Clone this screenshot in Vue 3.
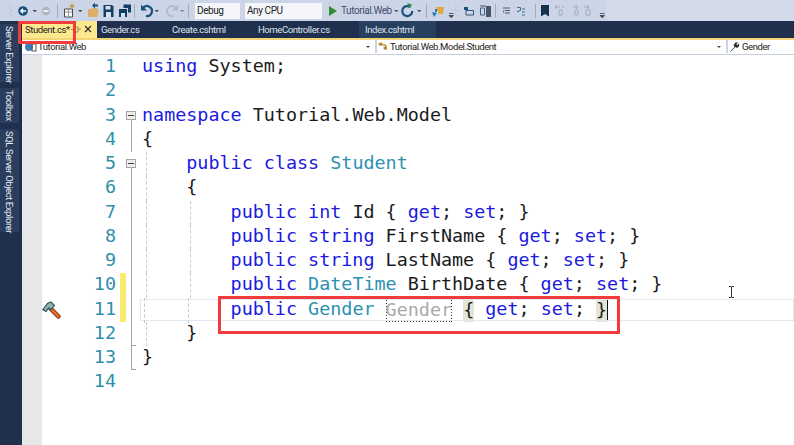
<script setup>
const k = 'kw', t = 'ty', p = 'pl'
const lines = [
  { i: 0, c: [[k, 'using'], [p, ' System;']] },
  { i: 0, c: [] },
  { i: 0, fold: 'box', c: [[k, 'namespace'], [p, ' Tutorial.Web.Model']] },
  { i: 0, fold: 'line', c: [[p, '{']] },
  { i: 1, fold: 'box', c: [[k, 'public class'], [p, ' '], [t, 'Student']] },
  { i: 1, fold: 'line', c: [[p, '{']] },
  { i: 2, fold: 'line', c: [[k, 'public int'], [p, ' Id { '], [k, 'get'], [p, '; '], [k, 'set'], [p, '; }']] },
  { i: 2, fold: 'line', c: [[k, 'public string'], [p, ' FirstName { '], [k, 'get'], [p, '; '], [k, 'set'], [p, '; }']] },
  { i: 2, fold: 'line', c: [[k, 'public string'], [p, ' LastName { '], [k, 'get'], [p, '; '], [k, 'set'], [p, '; }']] },
  { i: 2, fold: 'line', ch: 1, c: [[k, 'public'], [p, ' '], [t, 'DateTime'], [p, ' BirthDate { '], [k, 'get'], [p, '; '], [k, 'set'], [p, '; }']] },
  { i: 2, fold: 'line', ch: 1, cur: 1, c: [[k, 'public'], [p, ' '], [t, 'Gender'], [p, ' '], ['ghost', 'Gender'], [p, ' '], ['brace', '{'], [p, ' '], [k, 'get'], [p, '; '], [k, 'set'], [p, '; '], ['brace', '}'], ['caret', '']] },
  { i: 1, fold: 'end', c: [[p, '}']] },
  { i: 0, fold: 'last', c: [[p, '}']] },
  { i: 0, c: [] }
]
const tabs = ['Gender.cs', 'Create.cshtml', 'HomeController.cs', 'Index.cshtml']
const sideItems = ['Server Explorer', 'Toolbox', 'SQL Server Object Explorer']
</script>

<template>
  <div class="app">
    <div class="toolbar">
      <svg class="tb-icons" width="794" height="21" viewBox="0 0 794 21">
        <rect x="606" y="0" width="188" height="21" fill="#d3dbea"/>
        <g fill="#aeb5c4"><rect x="9" y="5" width="1" height="1"/><rect x="11" y="7" width="1" height="1"/><rect x="9" y="9" width="1" height="1"/><rect x="11" y="11" width="1" height="1"/><rect x="9" y="13" width="1" height="1"/><rect x="11" y="15" width="1" height="1"/></g>
        <circle cx="23" cy="11" r="4.800" fill="#17527f"/><path d="M26 11h-5M23 8.800L20.800 11l2.200 2.200" stroke="#fff" stroke-width="1.300" fill="none"/>
        <path d="M32.500 10h4.500l-2.250 2.300z" fill="#4a4a4a"/>
        <circle cx="46" cy="11" r="4.200" fill="#aeb3bd"/><rect x="43.300" y="10" width="5.400" height="2" fill="#e6e9f0"/>
        <rect x="57" y="4" width="1" height="14" fill="#a4acbc"/>
        <path d="M64.500 9h8v8h-8z" fill="#f4f5f8" stroke="#4a4a4a"/><path d="M65 12h7M68.500 9v8" stroke="#999"/><path d="M72 3.500v5M69.500 6h5" stroke="#c59a3e" stroke-width="1.600"/>
        <path d="M78 10h4.500l-2.250 2.300z" fill="#4a4a4a"/>
        <path d="M88 9h3.500l1-1h4.500v2h2l-2 7h-9z" fill="#e0ad66"/><path d="M92 5.500l3-3v2h3v2h-3v2z" fill="#17527f"/>
        <path d="M103.500 5h8.500l1.500 1.500V17h-10z" fill="#123f66"/><rect x="105.500" y="6" width="5" height="3.500" fill="#d8e0ee"/><rect x="106" y="12" width="5" height="5" fill="#d8e0ee"/>
        <path d="M119 9h8v8h-8z" fill="#123f66"/><path d="M123.500 4.500h7.500v8h-3V8h-4.500z" fill="#123f66"/><rect x="121" y="13" width="4" height="4" fill="#d8e0ee"/>
        <rect x="134" y="4" width="1" height="14" fill="#a4acbc"/>
        <path d="M143 8a5 5 0 1 1 3 8" stroke="#17527f" stroke-width="2.200" fill="none"/><path d="M141 4.500v6h6z" fill="#17527f"/>
        <path d="M154.500 10h4.500l-2.250 2.300z" fill="#4a4a4a"/>
        <path d="M176 8a5 5 0 1 0-3 8" stroke="#b3b9c4" stroke-width="1.600" fill="none"/><path d="M178 4.500v6h-6z" fill="#b3b9c4"/>
        <path d="M180 10h4.500l-2.250 2.300z" fill="#8a8a8a"/>
        <rect x="188" y="4" width="1" height="14" fill="#a4acbc"/>
        <path d="M229 10h5l-2.500 2.500z" fill="#444"/>
        <path d="M314 10h5l-2.500 2.500z" fill="#444"/>
        <path d="M329 6l8 5-8 5z" fill="#2f8f32"/>
        <path d="M394 10h4.500l-2.250 2.300z" fill="#555"/>
        <path d="M410.500 7.200a5 5 0 1 0 1.800 3.800" stroke="#17527f" stroke-width="2.200" fill="none"/><path d="M407 3l5 1.500-2 3.500z" fill="#2f8f32"/>
        <path d="M417 10h4.500l-2.250 2.300z" fill="#555"/>
        <rect x="426" y="4" width="1" height="14" fill="#a4acbc"/>
        <path d="M436 7h8l-1 7h-4z" fill="#e0a83c"/><path d="M432 12l5 1-3 4z" fill="#2a77b5"/><path d="M435 9h2v3h-2z" fill="#2a77b5"/>
        <path d="M449 13.500h4.500M449 15.500h4.500l-2.250 2.300z" stroke="#444" stroke-width=".8" fill="#444"/>
        <g fill="#aeb5c4"><rect x="455" y="5" width="1" height="1"/><rect x="457" y="7" width="1" height="1"/><rect x="455" y="9" width="1" height="1"/><rect x="457" y="11" width="1" height="1"/><rect x="455" y="13" width="1" height="1"/><rect x="457" y="15" width="1" height="1"/></g>
        <path d="M466 10.500h7.500v4.500H466z" stroke="#33506f" fill="none"/><path d="M464 7h4v3h-4z" fill="#17527f"/>
        <path d="M480.500 8h4v7h-4z" stroke="#3e5f88" fill="none"/><path d="M486 6h5v11h-5z" fill="#4a5568"/><path d="M480 6h6" stroke="#555"/>
        <rect x="495" y="4" width="1" height="14" fill="#a4acbc"/>
        <path d="M503 8h7M505 10.500h5M505 13h5" stroke="#4c5a6e" stroke-width="1.200"/><path d="M503 10l1.500 1.500L503 13z" fill="#43813f"/>
        <path d="M517 7.500h3.500v3H519v1h-2M522 9h3M522 12h3M522 15h3" stroke="#3f6f96" fill="none"/>
        <rect x="535" y="4" width="1" height="14" fill="#a4acbc"/>
        <path d="M541 5h8v11.500l-4-2.500-4 2.500z" fill="#17324f"/>
        <g stroke="#a2adbe" fill="none"><path d="M555 7h5M557 5l-2 2 2 2M559 10h3v5h-3z"/><path d="M564 7h-2"/><path d="M573 7h5M576 5l2 2-2 2M575 10h3v5h-3z"/><path d="M584 7h5M587 5l2 2-2 2M586 10h4v5h-4z"/></g>
        <path d="M600 13.500h4.500M600 15.500h4.500l-2.250 2.300z" stroke="#444" stroke-width=".8" fill="#444"/>
      </svg>
      <div class="combo debug">Debug</div>
      <div class="combo cpu">Any CPU</div>
      <div class="run">Tutorial.Web</div>
    </div>

    <div class="tabbar">
      <div class="tab-active">
        <span>Student.cs*</span>
        <svg class="tab-icons" width="24" height="11" viewBox="0 0 24 11">
          <path d="M3 3h4v5H3zM7 5h3M0 5.500h3" stroke="#9a8a4a" fill="none"/>
          <path d="M14 2l6 6M20 2l-6 6" stroke="#2c2c2c" stroke-width="1.200"/>
        </svg>
      </div>
      <div v-for="tab in tabs" :key="tab" class="tab">{{ tab }}</div>
      <div class="tab-pad"></div>
    </div>

    <div class="main">
      <div class="side">
        <div v-for="s in sideItems" :key="s" class="side-item">{{ s }}</div>
      </div>
      <div class="content">
        <div class="nav">
          <div class="nav-cell n1">
            <svg width="13" height="11" viewBox="0 0 13 11"><circle cx="5" cy="6" r="4" fill="#3f7fc0"/><rect x="8" y="3" width="4" height="7" fill="none" stroke="#555"/></svg>
            <span>Tutorial.Web</span>
            <i class="drop"></i>
          </div>
          <div class="nav-cell n2">
            <svg width="13" height="11" viewBox="0 0 13 11"><path d="M1 3l3-2 2 2-3 2zM6 7l2-2 2 2-2 2z" fill="#c98a2b"/><path d="M4 4h5v5" stroke="#a67426" fill="none"/></svg>
            <span>Tutorial.Web.Model.Student</span>
            <i class="drop"></i>
          </div>
          <div class="nav-cell n3">
            <svg width="11" height="12" viewBox="0 0 12 12"><path d="M1 11l5-5-1-2 2-3h3L8 3l1 1 2-2v3l-2 2-2-1-5 5z" fill="#2b2b2b"/></svg>
            <span>Gender</span>
          </div>
        </div>
        <div class="editor">
          <div class="glyph"></div>
          <div class="code">
            <div v-for="(l, n) in lines" :key="n" class="row">
              <div class="hammer-cell">
                <svg v-if="l.cur" width="20" height="20" viewBox="0 0 20 20">
                  <path d="M8 8l8.500 8.500" stroke="#6d2a12" stroke-width="4.500" stroke-linecap="round"/>
                  <path d="M8 8l8.500 8.500" stroke="#ee6a2c" stroke-width="2.700" stroke-linecap="round"/>
                  <path d="M.8 9.500L5.500 3.500 9 1.800l3.500 3.700-3.800 4.300-2.300-1.800-2.300 3.600z" fill="#8fb0b6" stroke="#1f4d50" stroke-width="1.100"/>
                </svg>
              </div>
              <div class="num">{{ n + 1 }}</div>
              <div class="change" :class="{ on: l.ch }"></div>
              <div class="fold" :class="l.fold">
                <span v-if="l.fold === 'box'" class="minus"></span>
              </div>
              <div class="text" :class="{ current: l.cur }">
                <i v-for="g in l.i" :key="g" class="guide" :style="{ left: (g * 44.500 - 41) + 'px' }"></i>
                <span class="indent">{{ '    '.repeat(l.i) }}</span><span v-for="(s, j) in l.c" :key="j" :class="s[0]">{{ s[1] }}</span>
              </div>
            </div>
          </div>
          <svg class="ibeam" width="7" height="12" viewBox="0 0 7 12"><path d="M1 .5h2l.5.5.5-.5h2M3.500 1v10M1 11.500h2l.5-.5.5.5h2" stroke="#333" fill="none"/></svg>
          <div class="outline o-code"></div>
        </div>
      </div>
    </div>
    <div class="outline o-tab"></div>
  </div>
</template>

<style>
html, body { margin: 0; background: #fff; }
</style>

<style scoped>
.app { position: relative; width: 794px; height: 445px; overflow: hidden; display: flex; flex-direction: column; font-family: Roboto, "Noto Sans", sans-serif; background: #fff; letter-spacing: -0.42px; }
.toolbar { position: relative; height: 21px; flex: none; background: #ccd5e8; font-size: 9.500px; color: #222; }
.tb-icons { position: absolute; left: 0; top: 0; }
.combo { position: absolute; top: 3px; height: 16px; line-height: 16px; background: #f4f6fa; padding-left: 2px; box-sizing: border-box; font-size: 10px; }
.debug { left: 195px; width: 45px; padding-left: 2px; }
.cpu { left: 245px; width: 77px; }
.run { position: absolute; left: 341px; top: 3px; line-height: 16px; color: #3e4f6a; font-size: 10px; }
.tabbar { height: 19px; flex: none; display: flex; background: #1f2f4d; border-bottom: 2px solid #f2d675; box-sizing: border-box; padding-left: 22px; font-size: 9.500px; }
.tab-active { width: 75px; height: 17px; background: #fbe88f; color: #222; line-height: 17px; display: flex; justify-content: space-between; align-items: center; padding: 0 2px 0 3px; box-sizing: border-box; }
.tab-icons { flex: none; }
.tab { height: 17px; line-height: 17px; color: #dfe5ef; flex: none; padding-left: 4px; box-sizing: border-box; }
.tab:nth-of-type(2) { width: 71px; }
.tab:nth-of-type(3) { width: 86px; }
.tab:nth-of-type(4) { width: 105px; }
.tab:nth-of-type(5) { width: 77px; background: #27405f; padding-left: 6px; }
.tab-pad { flex: 1; }
.main { flex: 1; display: flex; min-height: 0; }
.side { width: 22px; flex: none; background: #1f2f4d; display: flex; flex-direction: column; gap: 6px; box-sizing: border-box; margin-top: -19px; padding-top: 3px; position: relative; }
.side-item { writing-mode: vertical-rl; white-space: nowrap; color: #e8ecf3; font-size: 9.500px; line-height: 19px; width: 19px; background: #2b3d5c; box-sizing: border-box; padding: 2px 0; }
.side-item:nth-child(1) { height: 58px; }
.side-item:nth-child(2) { height: 35px; }
.side-item:nth-child(3) { height: 103px; }
.content { flex: 1; min-width: 0; display: flex; flex-direction: column; }
.nav { height: 14px; flex: none; display: flex; background: #fff; border-bottom: 1px solid #c8cfdc; font-size: 9.500px; color: #222; }
.nav-cell { position: relative; display: flex; align-items: center; gap: 1px; height: 13px; box-sizing: border-box; padding-left: 2px; }
.n1 { width: 353px; }
.n2 { width: 351px; border-left: 2px solid #ccd5e8; padding-left: 0; gap: 0; }
.n3 { flex: 1; border-left: 2px solid #ccd5e8; padding-left: 1px; gap: 2px; }
.drop { position: absolute; right: 5px; top: 6px; border: 2.500px solid transparent; border-top-color: #444; border-bottom: 0; }
.editor { position: relative; flex: 1; display: flex; min-height: 0; font-family: "DejaVu Sans Mono", monospace; font-size: 18.400px; letter-spacing: 0; }
.glyph { width: 20px; flex: none; background: #e6e7e8; }
.code { flex: 1; min-width: 0; }
.row { display: flex; height: 24.250px; line-height: 22.500px; }
.hammer-cell { width: 20px; flex: none; display: flex; align-items: center; }
.num { width: 54px; flex: none; text-align: right; color: #2f8fad; }
.change { width: 6px; margin-left: 4px; flex: none; }
.change.on { background: #f7ec6e; }
.fold { position: relative; width: 16px; flex: none; }
.fold.line::before, .fold.end::before, .fold.last::before { content: ""; position: absolute; left: 4.500px; top: 0; bottom: 0; width: 1px; background: #a5a5a5; }
.fold.end::after, .fold.last::after { content: ""; position: absolute; left: 4.500px; width: 5px; height: 1px; background: #a5a5a5; bottom: 0; }
.fold.box::before { content: ""; position: absolute; left: 4.500px; top: 12px; bottom: 0; width: 1px; background: #a5a5a5; }
.minus { position: absolute; left: 0; top: 7px; width: 10px; height: 9px; box-sizing: border-box; border: 1px solid #a5a5a5; background: #eee; z-index: 1; }
.minus::after { content: ""; position: absolute; left: 1px; right: 1px; top: 3px; height: 1px; background: #444; }
.text { position: relative; flex: 1; white-space: pre; color: #1b1b1b; }
.text.current { outline: 1px solid #e4e6f2; outline-offset: -1px; margin-left: -2px; padding-left: 2px; height: 22px; margin-top: 1px; line-height: 20.500px; }
.text.current .guide { top: -1px; bottom: -2px; }
.guide { position: absolute; top: 0; bottom: 0; width: 0; border-left: 1px dashed #c9c9c9; }
.kw { color: #1a1ae0; }
.ty { color: #2b91af; }
.pl { color: #1b1b1b; }
.ghost { display: inline-block; box-sizing: border-box; height: 23px; line-height: 22px; vertical-align: top; color: #a9a9a9; box-shadow: none; background-image: repeating-linear-gradient(90deg, #333 0 1px, transparent 1px 3px), repeating-linear-gradient(90deg, #333 0 1px, transparent 1px 3px), repeating-linear-gradient(0deg, #333 0 1px, transparent 1px 3px), repeating-linear-gradient(0deg, #333 0 1px, transparent 1px 3px); background-size: 100% 1px, 100% 1px, 1px 100%, 1px 100%; background-position: 0 0, 0 100%, 0 0, 100% 0; background-repeat: no-repeat; }
.brace { display: inline-block; height: 23px; line-height: 22px; vertical-align: top; background: #e2e6d6; }
.caret { display: inline-block; width: 1px; height: 22px; background: #111; vertical-align: top; }
.ibeam { position: absolute; left: 706px; top: 231px; }
.outline { position: absolute; border: 3px solid #f23b3b; box-sizing: border-box; pointer-events: none; }
.o-code { left: 196px; top: 241px; width: 402px; height: 38px; }
.o-tab { left: 18px; top: 21px; width: 58px; height: 23px; }
</style>
